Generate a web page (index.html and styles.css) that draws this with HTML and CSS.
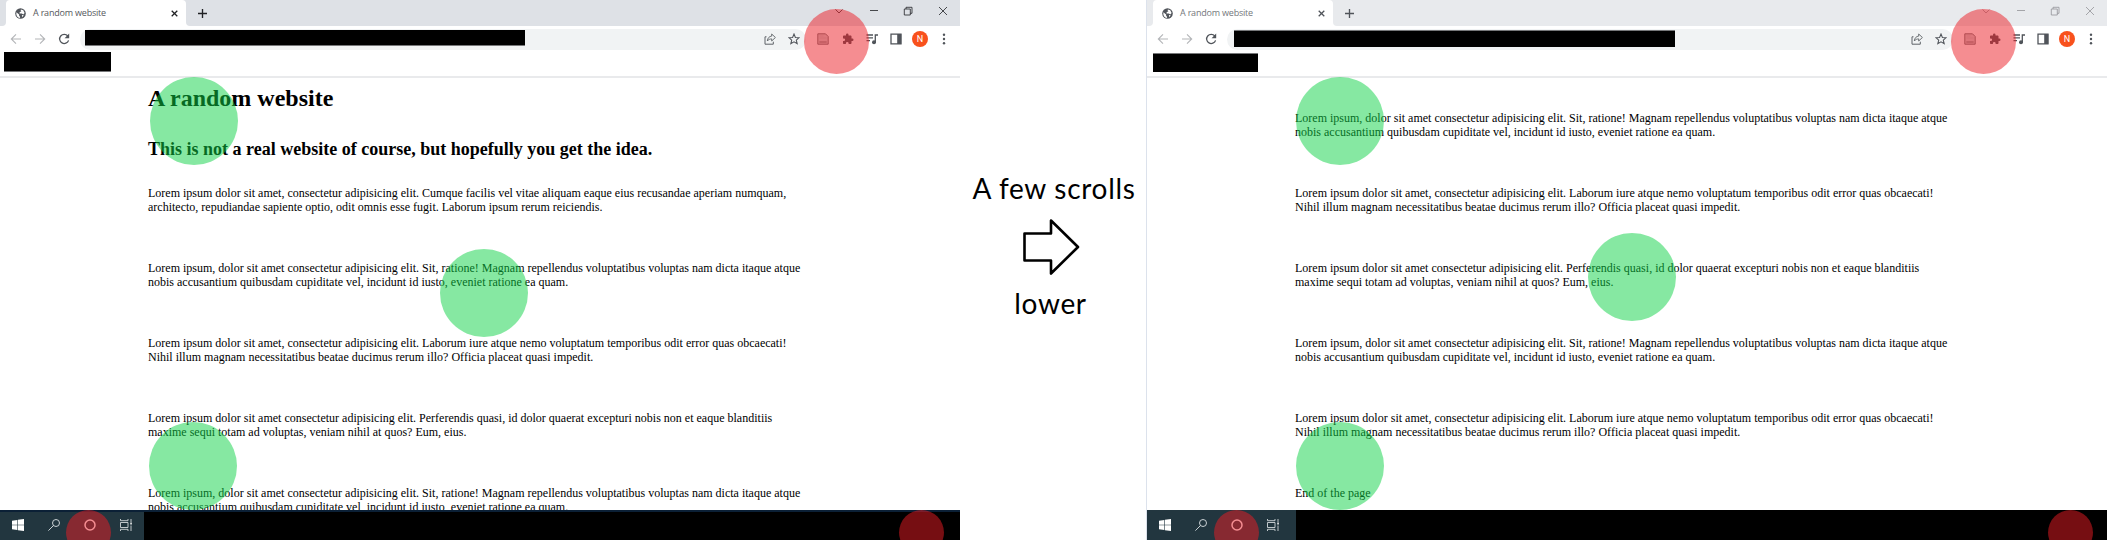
FILE: index.html
```html
<!DOCTYPE html>
<html lang="en">
<head>
<meta charset="utf-8">
<title>A random website</title>
<link rel="stylesheet" href="styles.css">
</head>
<body>
<svg class="defs" aria-hidden="true">
  <symbol id="globe" viewBox="0 0 24 24"><circle cx="12" cy="12" r="11.5" fill="#50545a"/><path d="M3 9l6 5v3l2 2v3C5 21 2 16 3 9zM13 3l5 2 3 6-3 3-3-2h-5v-3l4-2-2-2zM15 15l4 1-3 4z" fill="#fff"/></symbol>
  <symbol id="x" viewBox="0 0 10 10"><path d="M1 1l8 8M9 1L1 9" fill="none" stroke="currentColor" stroke-width="1.8"/></symbol>
  <symbol id="plus" viewBox="0 0 10 10"><path d="M5 0v10M0 5h10" fill="none" stroke="currentColor" stroke-width="1.5"/></symbol>
  <symbol id="back" viewBox="0 0 12 12"><path d="M11 6H1.5M6 1.3L1.3 6 6 10.7" fill="none" stroke="#b3b5b8" stroke-width="1.1"/></symbol>
  <symbol id="fwd" viewBox="0 0 12 12"><path d="M1 6h9.5M6 1.3L10.7 6 6 10.7" fill="none" stroke="#b3b5b8" stroke-width="1.1"/></symbol>
  <symbol id="reload" viewBox="0 0 12 12"><path d="M9.8 3A4.6 4.6 0 1 0 10.6 7.4" fill="none" stroke="#50545a" stroke-width="1.3"/><path d="M11.2.6v4.6H6.6z" fill="#50545a"/></symbol>
  <symbol id="share" viewBox="0 0 12 12"><path d="M2.5 3.8H1v7.4h8.3V8.7" fill="none" stroke="#5f6368"/><path d="M3.3 8c.3-3 2-4.7 4.4-4.9V1l3.7 3.5L7.7 8V5.9C5.9 5.9 4.4 6.5 3.3 8z" fill="none" stroke="#5f6368" stroke-width=".9"/></symbol>
  <symbol id="star" viewBox="0 0 12 12"><path d="M6 1l1.400 3.400 3.700.3-2.800 2.400.9 3.600L6 8.800l-3.200 1.900.9-3.600L.9 4.700l3.700-.3z" fill="none" stroke="#50545a" stroke-width="1.050"/></symbol>
  <symbol id="doc" viewBox="0 0 12 12"><path d="M.8.8h7.700l2.700 2.700v7.700H.8z" fill="#d0d0d2" stroke="#77787b" stroke-width="1"/><path d="M2.300 9h7.400" stroke="#77787b" stroke-width="1"/><path d="M2.500 3h4M2.500 5h7" stroke="#bbb" stroke-width=".6"/></symbol>
  <symbol id="puzzle" viewBox="0 0 24 24"><path d="M20.500 11H19V7c0-1.100-.9-2-2-2h-4V3.500a2.500 2.500 0 0 0-5 0V5H4c-1.100 0-2 .9-2 2v3.800h1.500a2.700 2.700 0 0 1 0 5.400H2V20c0 1.100.9 2 2 2h3.800v-1.500a2.700 2.700 0 0 1 5.400 0V22H17c1.100 0 2-.9 2-2v-4h1.500a2.500 2.500 0 0 0 0-5z" fill="#50545a"/></symbol>
  <symbol id="queue" viewBox="0 0 12 12"><path d="M.5 2h6.500M.5 4.800h6.500M.5 7.600h3.500M9.300 9.500V2h2.700" fill="none" stroke="#50545a" stroke-width="1.300"/><circle cx="8" cy="9.200" r="2" fill="#50545a"/></symbol>
  <symbol id="panel" viewBox="0 0 12 12"><path d="M1 1.200h10v9.600H1z" fill="none" stroke="#50545a" stroke-width="1.300"/><path d="M7.200 1h4v10h-4z" fill="#50545a"/></symbol>
  <symbol id="menu" viewBox="0 0 12 12"><g fill="#50545a"><circle cx="6" cy="1.700" r="1.200"/><circle cx="6" cy="6" r="1.200"/><circle cx="6" cy="10.300" r="1.200"/></g></symbol>
  <symbol id="chev" viewBox="0 0 10 10"><path d="M1.500 3.500L5 7l3.500-3.500" fill="none" stroke="currentColor" stroke-width=".8"/></symbol>
  <symbol id="min" viewBox="0 0 10 10"><path d="M1 4.500h8" fill="none" stroke="currentColor" stroke-width=".8"/></symbol>
  <symbol id="restore" viewBox="0 0 10 10"><path d="M1.300 3h6v6h-6zM3 3V1.300h6v6H7.300" fill="none" stroke="currentColor" stroke-width=".8"/></symbol>
  <symbol id="close" viewBox="0 0 10 10"><path d="M1 1l8 8M9 1L1 9" fill="none" stroke="currentColor" stroke-width=".8"/></symbol>
  <symbol id="win" viewBox="0 0 12 12"><path d="M0 1.700L5.300.9v4.800H0zM5.900.8L12 0v5.700H5.900zM0 6.300h5.300v4.800L0 10.300zM5.900 6.300H12V12l-6.100-.8z" fill="#fff"/></symbol>
  <symbol id="search" viewBox="0 0 12 12"><circle cx="8" cy="4" r="3.500" fill="none" stroke="#dde2e4" stroke-width=".9"/><path d="M5.500 6.500L.4 11.600" stroke="#dde2e4" stroke-width=".9"/></symbol>
  <symbol id="ring" viewBox="0 0 12 12"><circle cx="6" cy="6" r="5" fill="none" stroke="#fff" stroke-width="1.500"/></symbol>
  <symbol id="task" viewBox="0 0 12 12"><path d="M.5 0v1.700h7.500V0M.5 12v-1.700h7.500V12M.5 3.500h7.500v5H.5zM11 0v3M11 6.500V12" fill="none" stroke="#d2d8da" stroke-width=".9"/><path d="M10.300 3.500h1.500v2h-1.500z" fill="#fff"/></symbol>
</svg>

<main class="scene">
  <section class="window">
    <header class="tabstrip">
      <div class="edge"></div>
      <div class="tab"><svg class="globe"><use href="#globe"/></svg><span class="title">A random website</span><svg class="x"><use href="#x"/></svg></div>
      <div class="rest"><svg class="plus"><use href="#plus"/></svg>
        <div class="controls"><svg><use href="#chev"/></svg><svg><use href="#min"/></svg><svg><use href="#restore"/></svg><svg><use href="#close"/></svg></div></div>
    </header>
    <nav class="toolbar">
      <div class="slot"><svg><use href="#back"/></svg></div><div class="slot"><svg><use href="#fwd"/></svg></div><div class="slot"><svg><use href="#reload"/></svg></div>
      <div class="address"><div class="redacted url"></div><div class="slot"><svg><use href="#share"/></svg></div><div class="slot"><svg><use href="#star"/></svg></div></div>
      <div class="slot"><svg><use href="#doc"/></svg></div><div class="slot"><svg><use href="#puzzle"/></svg></div><div class="slot"><svg><use href="#queue"/></svg></div><div class="slot"><svg><use href="#panel"/></svg></div><div class="slot"><span class="avatar">N</span></div><div class="slot"><svg><use href="#menu"/></svg></div>
    </nav>
    <div class="bookmarks"><div class="redacted"></div></div>
    <article class="page">
      <h1>A random website</h1>
      <h2>This is not a real website of course, but hopefully you get the idea.</h2>
      <p>Lorem ipsum dolor sit amet, consectetur adipisicing elit. Cumque facilis vel vitae aliquam eaque eius recusandae aperiam numquam,<br>architecto, repudiandae sapiente optio, odit omnis esse fugit. Laborum ipsum rerum reiciendis.</p>
      <p>Lorem ipsum, dolor sit amet consectetur adipisicing elit. Sit, ratione! Magnam repellendus voluptatibus voluptas nam dicta itaque atque<br>nobis accusantium quibusdam cupiditate vel, incidunt id iusto, eveniet ratione ea quam.</p>
      <p>Lorem ipsum dolor sit amet, consectetur adipisicing elit. Laborum iure atque nemo voluptatum temporibus odit error quas obcaecati!<br>Nihil illum magnam necessitatibus beatae ducimus rerum illo? Officia placeat quasi impedit.</p>
      <p>Lorem ipsum dolor sit amet consectetur adipisicing elit. Perferendis quasi, id dolor quaerat excepturi nobis non et eaque blanditiis<br>maxime sequi totam ad voluptas, veniam nihil at quos? Eum, eius.</p>
      <p>Lorem ipsum, dolor sit amet consectetur adipisicing elit. Sit, ratione! Magnam repellendus voluptatibus voluptas nam dicta itaque atque<br>nobis accusantium quibusdam cupiditate vel, incidunt id iusto, eveniet ratione ea quam.</p>
    </article>
    <footer class="taskbar lined"><div class="apps"><svg><use href="#win"/></svg><svg><use href="#search"/></svg><svg><use href="#ring"/></svg><svg><use href="#task"/></svg></div><div class="black"></div></footer>
    <i class="spot green l1"></i><i class="spot green l2"></i><i class="spot green l3"></i>
    <i class="spot red ext"></i><i class="spot red small cortana"></i><i class="spot red small tray"></i>
  </section>

  <aside class="caption">
    <div class="top">A few scrolls</div>
    <svg class="arrow" viewBox="0 0 58 58"><path d="M2.500 15.500H29V2.500L56 29 29 55.500V42.500H2.500z" fill="none" stroke="#000" stroke-width="2.600" stroke-linejoin="round"/></svg>
    <div class="bottom">lower</div>
  </aside>

  <section class="window inactive">
    <header class="tabstrip">
      <div class="edge"></div>
      <div class="tab"><svg class="globe"><use href="#globe"/></svg><span class="title">A random website</span><svg class="x"><use href="#x"/></svg></div>
      <div class="rest"><svg class="plus"><use href="#plus"/></svg>
        <div class="controls"><svg><use href="#chev"/></svg><svg><use href="#min"/></svg><svg><use href="#restore"/></svg><svg><use href="#close"/></svg></div></div>
    </header>
    <nav class="toolbar">
      <div class="slot"><svg><use href="#back"/></svg></div><div class="slot"><svg><use href="#fwd"/></svg></div><div class="slot"><svg><use href="#reload"/></svg></div>
      <div class="address"><div class="redacted url"></div><div class="slot"><svg><use href="#share"/></svg></div><div class="slot"><svg><use href="#star"/></svg></div></div>
      <div class="slot"><svg><use href="#doc"/></svg></div><div class="slot"><svg><use href="#puzzle"/></svg></div><div class="slot"><svg><use href="#queue"/></svg></div><div class="slot"><svg><use href="#panel"/></svg></div><div class="slot"><span class="avatar">N</span></div><div class="slot"><svg><use href="#menu"/></svg></div>
    </nav>
    <div class="bookmarks"><div class="redacted"></div></div>
    <article class="page scrolled">
      <p>Lorem ipsum, dolor sit amet consectetur adipisicing elit. Sit, ratione! Magnam repellendus voluptatibus voluptas nam dicta itaque atque<br>nobis accusantium quibusdam cupiditate vel, incidunt id iusto, eveniet ratione ea quam.</p>
      <p>Lorem ipsum dolor sit amet, consectetur adipisicing elit. Laborum iure atque nemo voluptatum temporibus odit error quas obcaecati!<br>Nihil illum magnam necessitatibus beatae ducimus rerum illo? Officia placeat quasi impedit.</p>
      <p>Lorem ipsum dolor sit amet consectetur adipisicing elit. Perferendis quasi, id dolor quaerat excepturi nobis non et eaque blanditiis<br>maxime sequi totam ad voluptas, veniam nihil at quos? Eum, eius.</p>
      <p>Lorem ipsum, dolor sit amet consectetur adipisicing elit. Sit, ratione! Magnam repellendus voluptatibus voluptas nam dicta itaque atque<br>nobis accusantium quibusdam cupiditate vel, incidunt id iusto, eveniet ratione ea quam.</p>
      <p>Lorem ipsum dolor sit amet, consectetur adipisicing elit. Laborum iure atque nemo voluptatum temporibus odit error quas obcaecati!<br>Nihil illum magnam necessitatibus beatae ducimus rerum illo? Officia placeat quasi impedit.</p>
      <p>End of the page</p>
    </article>
    <footer class="taskbar"><div class="apps"><svg><use href="#win"/></svg><svg><use href="#search"/></svg><svg><use href="#ring"/></svg><svg><use href="#task"/></svg></div><div class="black"></div></footer>
    <i class="spot green r1"></i><i class="spot green r2"></i><i class="spot green r3"></i>
    <i class="spot red ext"></i><i class="spot red small cortana"></i><i class="spot red small tray"></i>
  </section>
</main>
</body>
</html>
```

FILE: styles.css
```css
* { box-sizing: border-box; }
body { margin: 0; background: #fff; }
svg { display: block; }
.defs { position: absolute; width: 0; height: 0; }
.scene { display: grid; grid-template-columns: 960px 187px 960px; width: 2107px; height: 540px; overflow: hidden; }

.window { position: relative; display: flex; flex-direction: column; height: 540px; overflow: hidden; background: #fff; --strip: #dee1e6; color: #202124; }
.inactive { --strip: #e8eaed; color: #50545a; }

.tabstrip { display: flex; height: 26px; flex: none; background: #fff; }
.edge { width: 6px; background: var(--strip); border-bottom-right-radius: 4px; }
.tab { display: flex; align-items: center; width: 180px; padding: 0 8px 0 9px; background: #fff; border-radius: 4px 4px 0 0; box-shadow: 0 -5px 0 4px var(--strip); clip-path: inset(0); }
.globe { width: 11px; height: 11px; flex: none; }
.title { flex: 1; margin-left: 7px; font: 9px/26px "Open Sans", "Noto Sans", sans-serif; letter-spacing: -.2px; color: #55585d; white-space: nowrap; }
.inactive .title { color: #74777b; }
.x { width: 7px; height: 7px; }
.rest { display: flex; flex: 1; background: var(--strip); border-bottom-left-radius: 4px; }
.plus { width: 9px; height: 9px; margin: 9px 0 0 12px; }
.controls { display: flex; gap: 24.6px; margin: 6px 12px 0 auto; }
.controls svg { width: 10px; height: 10px; }
.inactive .controls { color: #929397; }

.toolbar { display: flex; align-items: center; height: 25px; flex: none; padding: 1px 4px 0; }
.slot { display: flex; align-items: center; justify-content: center; width: 24.1px; height: 24px; flex: none; }
.slot svg { width: 12px; height: 12px; }
.address { display: flex; align-items: center; height: 21px; flex: 1; margin: 0 5px 0 4px; background: #f1f3f4; border-radius: 11px; }
.redacted { background: #000; border: 0 solid #77787a; border-bottom-width: 1px; }
.url { width: 440px; height: 16px; margin: -2px auto 0 5px; }
.avatar { width: 16.4px; height: 16.4px; border-radius: 50%; background: #f8511d; color: #fff; font: 9px/16.4px Roboto, sans-serif; text-align: center; }
.bookmarks { height: 27px; flex: none; padding: 1px 0 0 3.5px; border-bottom: 2px solid #e9eaec; }
.bookmarks .redacted { width: 107.5px; height: 20px; }
.inactive .url { width: 441px; height: 17px; margin: -1px auto 0 7px; border-width: 1px 0 0; }
.inactive .bookmarks { padding: 2px 0 0 6px; }
.inactive .bookmarks .redacted { width: 104.5px; height: 19px; border-width: 1px 0 0; }

.page { flex: 1; min-height: 0; overflow: hidden; padding: 7px 0 0 148px; color: #000; font: 12px/13.5px "Liberation Serif", serif; white-space: nowrap; }
.page h1 { margin: 0; font-size: 24px; line-height: 27px; }
.page h2 { margin: 27px 0 28px; font-size: 18px; line-height: 20px; }
.page p { margin: 0 0 48px; letter-spacing: .003px; }
.scrolled { padding-top: 34px; }

.taskbar { display: flex; height: 30px; flex: none; background: #22363f; }
.apps { display: flex; align-items: center; width: 144px; gap: 24px; padding-left: 12px; }
.apps svg { width: 12px; height: 12px; }
.black { flex: 1; background: #000; }
.lined { border-top: 2px solid #0b2036; }
.lined .apps { padding-bottom: 2px; }
.inactive .apps { width: 149px; }

.spot { position: absolute; width: 88px; height: 88px; border-radius: 50%; }
.green { background: rgba(14, 209, 69, .5); }
.red { background: rgba(236, 28, 36, .5); }
.l1 { left: 150px; top: 77px; }
.l2 { left: 440px; top: 249px; }
.l3 { left: 149px; top: 422px; }
.r1 { left: 148.5px; top: 77px; }
.r2 { left: 440.5px; top: 233px; }
.r3 { left: 148.5px; top: 421.5px; }
.ext { left: 803.5px; top: 9px; width: 65px; height: 65px; }
.small { width: 45px; height: 45px; top: 510px; }
.cortana { left: 66px; }
.tray { left: 899px; }
.inactive .cortana { left: 67px; }
.inactive .tray { left: 900.5px; }

.caption { display: flex; flex-direction: column; align-items: center; padding: 170px 0 0; border-right: 1px solid #dce2ec; font: 28px/36px Lato, sans-serif; letter-spacing: .7px; color: #000; }
.top { padding-left: 2px; white-space: nowrap; }
.bottom { padding-right: 5px; }
.caption .arrow { width: 58px; height: 58px; margin: 12px 4px 9px 0; }
```
